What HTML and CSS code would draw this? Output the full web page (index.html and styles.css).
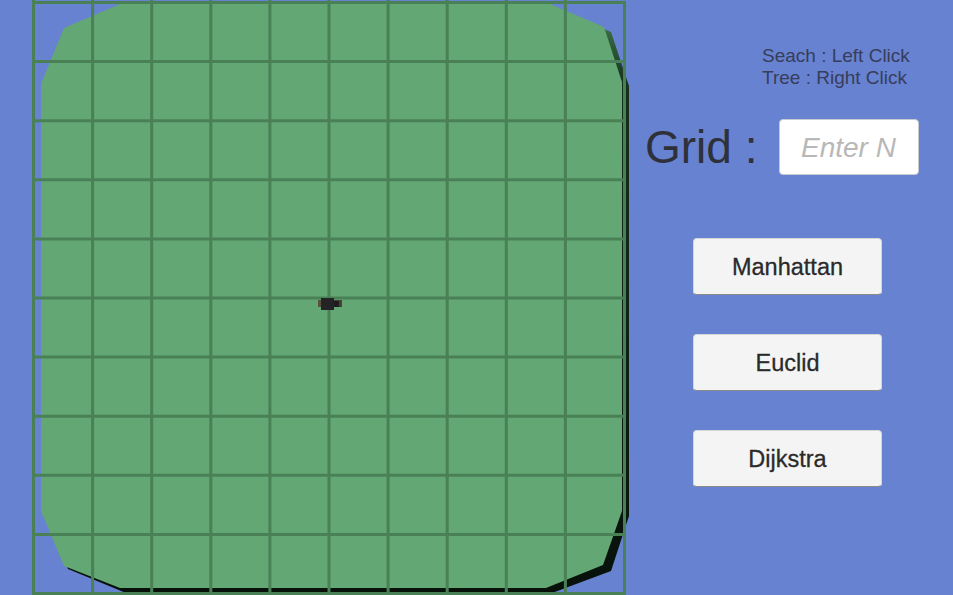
FILE: index.html
```html
<!DOCTYPE html>
<html>
<head>
<meta charset="utf-8">
<link rel="stylesheet" href="styles.css">
</head>
<body>
<div class="stage">
  <svg class="board" width="632" height="595" viewBox="0 0 632 595">
    <defs>
      <linearGradient id="shade" x1="0" y1="0" x2="0" y2="595" gradientUnits="userSpaceOnUse">
        <stop offset="0" stop-color="#4d8d5c"/>
        <stop offset="0.14" stop-color="#16301d"/>
        <stop offset="1" stop-color="#07110a"/>
      </linearGradient>
    </defs>
    <polygon fill="url(#shade)" points="126,8 555,8 611,32 629,86 629,516 611,571 552,593 126,593 68,569 44,514 44,88 70,32"/>
    <polygon fill="#63a774" points="120,4 550,4 604,27 622,82 622,511 603,565 546,588 120,588 64,566 41,511 41,84 64,28"/>
    <g stroke="#4a8056" stroke-width="3">
      <line x1="33.5" y1="0" x2="33.5" y2="595"/>
      <line x1="92.6" y1="0" x2="92.6" y2="595"/>
      <line x1="151.7" y1="0" x2="151.7" y2="595"/>
      <line x1="210.8" y1="0" x2="210.8" y2="595"/>
      <line x1="269.9" y1="0" x2="269.9" y2="595"/>
      <line x1="329" y1="0" x2="329" y2="595"/>
      <line x1="388.1" y1="0" x2="388.1" y2="595"/>
      <line x1="447.2" y1="0" x2="447.2" y2="595"/>
      <line x1="506.3" y1="0" x2="506.3" y2="595"/>
      <line x1="565.4" y1="0" x2="565.4" y2="595"/>
      <line x1="624.5" y1="1" x2="624.5" y2="595"/>
      <line x1="32" y1="2.5" x2="626" y2="2.5"/>
      <line x1="32" y1="61.6" x2="626" y2="61.6"/>
      <line x1="32" y1="120.7" x2="626" y2="120.7"/>
      <line x1="32" y1="179.8" x2="626" y2="179.8"/>
      <line x1="32" y1="238.9" x2="626" y2="238.9"/>
      <line x1="32" y1="298" x2="626" y2="298"/>
      <line x1="32" y1="357.1" x2="626" y2="357.1"/>
      <line x1="32" y1="416.2" x2="626" y2="416.2"/>
      <line x1="32" y1="475.3" x2="626" y2="475.3"/>
      <line x1="32" y1="534.4" x2="626" y2="534.4"/>
      <line x1="32" y1="593.5" x2="626" y2="593.5"/>
    </g>
    <rect x="318" y="300" width="4" height="7" fill="#5e5040"/>
    <rect x="333" y="300" width="9" height="7" fill="#4a3f33"/>
    <rect x="334" y="301" width="5" height="6" fill="#1e1c1c"/>
    <rect x="321" y="298" width="13" height="12" fill="#232225"/>
  </svg>
  <div class="panel">
    <div class="hints">
      <div>Seach : Left Click</div>
      <div>Tree : Right Click</div>
    </div>
    <div class="grid-row">
      <span class="grid-label">Grid :</span>
      <div class="grid-input">Enter N</div>
    </div>
    <div class="buttons">
      <div class="btn">Manhattan</div>
      <div class="btn">Euclid</div>
      <div class="btn">Dijkstra</div>
    </div>
  </div>
</div>
</body>
</html>
```

FILE: styles.css
```css
html, body {
  margin: 0;
  padding: 0;
}
body {
  width: 953px;
  height: 595px;
  overflow: hidden;
  background: #6782d0;
  font-family: "Liberation Sans", Arial, sans-serif;
}
.stage {
  display: flex;
  width: 953px;
  height: 595px;
}
.board {
  flex: none;
  display: block;
}
.panel {
  flex: 1;
  display: flex;
  flex-direction: column;
}
.hints {
  margin: 45px 0 0 130px;
  font-size: 19px;
  line-height: 22px;
  color: #373d5c;
}
.grid-row {
  display: flex;
  align-items: center;
  margin: 30px 0 0 13px;
}
.grid-label {
  font-size: 46px;
  color: #2e3139;
  width: 134px;
  line-height: 56px;
}
.grid-input {
  width: 140px;
  height: 56px;
  box-sizing: border-box;
  background: #fff;
  border: 1px solid #c9c9d0;
  border-radius: 4px;
  font-style: italic;
  font-size: 28px;
  color: #b8b8b8;
  line-height: 56px;
  padding-left: 21px;
  white-space: nowrap;
  overflow: hidden;
}
.buttons {
  display: flex;
  flex-direction: column;
  gap: 39px;
  margin: 63px 0 0 61px;
}
.btn {
  width: 189px;
  height: 57px;
  box-sizing: border-box;
  background: #f4f4f4;
  border: 1px solid #d6d6d6;
  border-bottom-color: #8a8a8a;
  border-radius: 4px;
  font-size: 23.5px;
  color: #2a2a2a;
  -webkit-text-stroke: 0.3px #2a2a2a;
  padding-top: 2px;
  display: flex;
  align-items: center;
  justify-content: center;
}
```
